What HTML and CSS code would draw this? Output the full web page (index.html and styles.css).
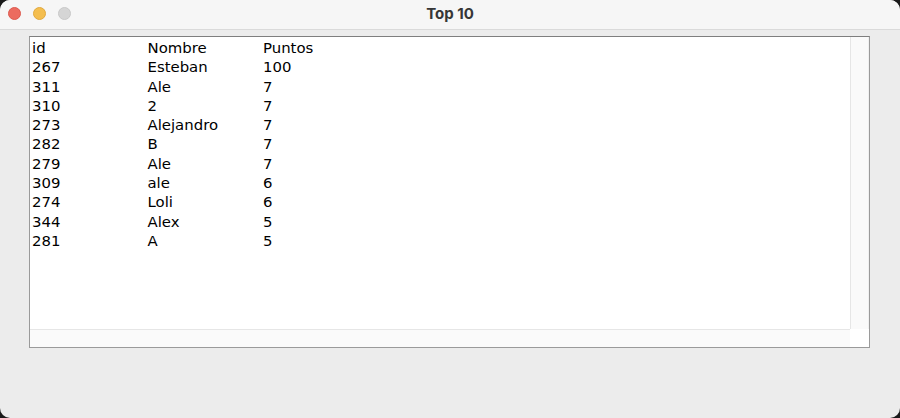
FILE: index.html
```html
<!DOCTYPE html>
<html>
<head>
<meta charset="utf-8">
<link rel="stylesheet" href="styles.css">
</head>
<body>
<div class="window">
  <div class="titlebar">
    <div class="lights">
      <span class="light red"></span>
      <span class="light yellow"></span>
      <span class="light gray"></span>
    </div>
    <div class="title">Top 10</div>
  </div>
  <div class="content">
    <div class="scrollpane">
      <div class="viewport">
        <div class="text">
          <div class="row"><span>id</span><span>Nombre</span><span>Puntos</span></div>
          <div class="row"><span>267</span><span>Esteban</span><span>100</span></div>
          <div class="row"><span>311</span><span>Ale</span><span>7</span></div>
          <div class="row"><span>310</span><span>2</span><span>7</span></div>
          <div class="row"><span>273</span><span>Alejandro</span><span>7</span></div>
          <div class="row"><span>282</span><span>B</span><span>7</span></div>
          <div class="row"><span>279</span><span>Ale</span><span>7</span></div>
          <div class="row"><span>309</span><span>ale</span><span>6</span></div>
          <div class="row"><span>274</span><span>Loli</span><span>6</span></div>
          <div class="row"><span>344</span><span>Alex</span><span>5</span></div>
          <div class="row"><span>281</span><span>A</span><span>5</span></div>
        </div>
        <div class="vscroll"></div>
      </div>
      <div class="hbar">
        <div class="hscroll"></div>
        <div class="corner"></div>
      </div>
    </div>
  </div>
</div>
</body>
</html>
```
FILE: styles.css
```css
html, body {
  margin: 0;
  padding: 0;
  background: #1a1a1a;
}
.window {
  width: 900px;
  height: 418px;
  background: #ececec;
  border-radius: 10px;
  overflow: hidden;
  display: flex;
  flex-direction: column;
}
.titlebar {
  height: 29px;
  background: #f6f6f6;
  border-bottom: 1px solid #dadada;
  position: relative;
  display: flex;
  align-items: center;
  justify-content: center;
  flex-shrink: 0;
}
.lights {
  position: absolute;
  left: 8px;
  top: 7px;
  display: flex;
  gap: 12px;
}
.light {
  width: 13px;
  height: 13px;
  border-radius: 50%;
  box-sizing: border-box;
}
.red { background: #ec6b5f; border: 1px solid #dc5a4f; }
.yellow { background: #f4be4f; border: 1px solid #e0a93f; }
.gray { background: #d5d5d5; border: 1px solid #c8c8c8; }
.title {
  font-family: "Inter", "Liberation Sans", sans-serif;
  font-weight: 700;
  font-size: 15px;
  color: #363636;
  margin-top: -3px;
}
.content {
  padding: 6px 30px 0 29px;
}
.scrollpane {
  width: 839px;
  height: 310px;
  border: 1px solid #9a9a9a;
  border-top-color: #7e7e7e;
  background: #fff;
  display: flex;
  flex-direction: column;
}
.viewport {
  flex: 1;
  display: flex;
  min-height: 0;
}
.text {
  flex: 1;
  padding: 2px 0 0 2px;
  font-family: "DejaVu Sans", sans-serif;
  font-size: 14.9px;
  color: #000;
}
.row {
  display: grid;
  grid-template-columns: 115.5px 115.5px auto;
  height: 19.3px;
  line-height: 19.3px;
}
.vscroll {
  width: 17px;
  background: #fafafa;
  border-left: 1px solid #e6e6e6;
  border-right: 1px solid #f0f0f0;
}
.hbar {
  height: 18px;
  display: flex;
  flex-shrink: 0;
}
.hscroll {
  flex: 1;
  background: #fafafa;
  border-top: 1px solid #e6e6e6;
}
.corner {
  width: 19px;
  background: #fff;
}
```
